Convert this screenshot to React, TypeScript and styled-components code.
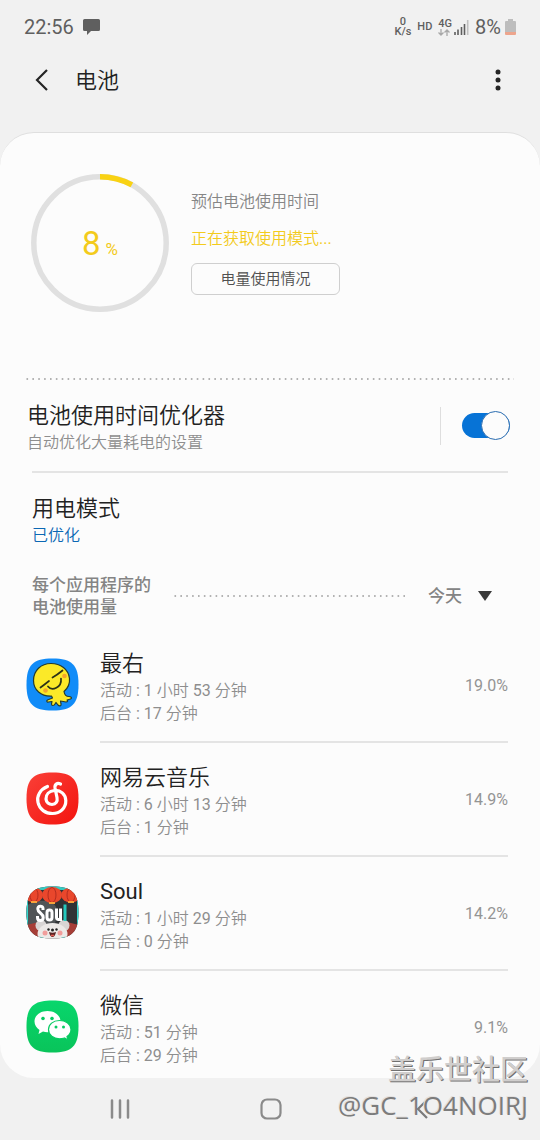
import React, { useState } from 'react';
import styled, { createGlobalStyle } from 'styled-components';

const lightFont = 'Roboto, "Noto Sans CJK SC DemiLight", "Noto Sans CJK SC", sans-serif';
const mediumFont = 'Roboto, "Noto Sans CJK SC", sans-serif';

const GlobalStyle = createGlobalStyle`
  *, *::before, *::after { box-sizing: border-box; }
  body {
    margin: 0;
    background: #f1f1f1;
    color: #222222;
    font-family: ${lightFont};
    font-size: 16px;
    font-weight: 400;
  }
  h1, h2, h3, p, ul { margin: 0; padding: 0; font-weight: inherit; }
  button, select { font-family: inherit; font-weight: inherit; }
`;

const Screen = styled.div`
  position: relative;
  display: flex;
  flex-direction: column;
  min-height: 100vh;
`;

const StatusBar = styled.div`
  display: flex;
  align-items: center;
  justify-content: space-between;
  height: 54px;
  padding: 0 24px;
  color: #5f5f5f;
`;

const StatusGroup = styled.div<{ $gap: number }>`
  display: flex;
  align-items: center;
  gap: ${(p) => p.$gap}px;
`;

const Clock = styled.span`
  font-size: 20px;
  line-height: 24px;
`;

const SmallStatus = styled.span`
  font-size: 11px;
  line-height: 10px;
  font-weight: 500;
  text-align: center;
  white-space: pre-line;
`;

const AppBar = styled.header`
  display: flex;
  align-items: center;
  height: 52px;
  margin-bottom: 26px;
  padding: 0 22px;
`;

const IconButton = styled.button`
  display: flex;
  align-items: center;
  justify-content: center;
  width: 40px;
  height: 40px;
  padding: 0;
  border: 0;
  background: none;
`;

const PageTitle = styled.h1`
  flex: 1;
  margin-left: 13px;
  padding-top: 2px;
  font-size: 22px;
  line-height: 32px;
`;

const Card = styled.main`
  border-top: 1px solid #dfdfdf;
  border-radius: 34px;
  background: #fcfcfc;
`;

const Summary = styled.section`
  display: flex;
  gap: 22px;
  padding: 41px 31px 66px;
`;

const Gauge = styled.div`
  display: grid;
  place-items: center;
  flex: none;
  width: 138px;
  height: 138px;
  > * { grid-area: 1 / 1; }
`;

const GaugeValue = styled.p`
  padding-top: 6px;
  color: #f3cb1c;
  font-size: 33px;
  line-height: 36px;
`;

const GaugeUnit = styled.span`
  margin-left: 5px;
  font-size: 17px;
`;

const SummaryText = styled.div`
  display: flex;
  flex-direction: column;
  align-items: flex-start;
  padding-top: 15px;
`;

const Caption = styled.p<{ $accent?: boolean }>`
  margin-bottom: 11px;
  color: ${(p) => (p.$accent ? '#f3cb1c' : '#868686')};
  font-size: 16px;
  line-height: 26px;
`;

const OutlineButton = styled.button`
  width: 149px;
  height: 32px;
  padding: 0;
  border: 1px solid #cfcfcf;
  border-radius: 6px;
  background: none;
  color: #505050;
  font-size: 15px;
  line-height: 24px;
`;

const Dots = styled.svg`
  display: block;
  flex: 1;
  min-width: 0;
  width: 100%;
  height: 2px;
`;

const DottedRule = styled.div`
  margin: 0 26px;
`;

const SettingRow = styled.label`
  display: flex;
  align-items: center;
  height: 91px;
  padding: 0 30px 0 27px;
`;

const SettingText = styled.span`
  display: flex;
  flex: 1;
  flex-direction: column;
  padding-top: 4px;
`;

const Title = styled.span`
  font-size: 22px;
  line-height: 30px;
`;

const Detail = styled.span<{ $blue?: boolean }>`
  color: ${(p) => (p.$blue ? '#0b68b4' : '#8e8e8e')};
  font-size: 16px;
  line-height: 23px;
`;

const Separator = styled.span`
  width: 1px;
  height: 38px;
  margin-right: 21px;
  background: #dedede;
`;

const Switch = styled.input`
  appearance: none;
  display: flex;
  align-items: center;
  justify-content: flex-end;
  width: 48px;
  height: 25px;
  margin: 0;
  border-radius: 13px;
  background: #0773d6;

  &::before {
    content: '';
    flex: none;
    width: 29px;
    height: 29px;
    border: 1px solid #2a6cb0;
    border-radius: 50%;
    background: #fcfcfc;
  }
  &:not(:checked) {
    justify-content: flex-start;
    background: #bbbbbb;
  }
`;

const Divider = styled.hr`
  height: 2px;
  margin: 0 32px;
  border: 0;
  background: #e4e4e4;
`;

const ModeRow = styled.section`
  display: flex;
  flex-direction: column;
  padding: 21px 32px 0;
`;

const UsageHeader = styled.div`
  display: flex;
  align-items: center;
  padding: 27px 32px 11px;
  color: #848484;
  font-family: ${mediumFont};
  font-weight: 500;
`;

const UsageTitle = styled.h2`
  width: 142px;
  font-size: 17px;
  line-height: 22px;
  white-space: pre-line;
`;

const Period = styled.label`
  display: flex;
  align-items: center;
  margin-left: 22px;
  padding-right: 16px;
`;

const PeriodSelect = styled.select`
  appearance: none;
  width: 50px;
  padding: 0;
  border: 0;
  background: none;
  color: #848484;
  font-size: 17px;
  line-height: 24px;
`;

const AppList = styled.ul`
  list-style: none;
`;

const AppRow = styled.li`
  display: flex;
  gap: 21px;
  height: 114px;
  padding: 0 32px 0 26px;
  &:last-child { height: 107px; }
`;

const AppIcon = styled.svg`
  flex: none;
  width: 53px;
  height: 53px;
  margin-top: 29px;
`;

const AppBody = styled.div`
  display: flex;
  flex: 1;
  align-items: center;
  justify-content: space-between;
  border-bottom: 2px solid #e4e4e4;
  ${AppRow}:last-child & { border-bottom-color: transparent; }
`;

const AppText = styled.div`
  display: flex;
  flex-direction: column;
  align-self: flex-start;
  padding-top: 20px;
`;

const Share = styled.span`
  align-self: flex-start;
  padding-top: 45px;
  color: #949494;
  font-size: 16px;
  line-height: 23px;
`;

const NavBar = styled.nav`
  display: grid;
  grid-template-columns: repeat(3, 1fr);
  place-items: center;
  flex: 1;
  min-height: 62px;
  padding: 0 43px 0 45px;
`;

const Watermark = styled.p`
  position: absolute;
  right: 12px;
  bottom: 17px;
  color: #7c7c7c;
  font-family: "Open Sans", "Noto Sans CJK SC", sans-serif;
  font-size: 26px;
  line-height: 36px;
  text-align: right;
  text-shadow: -1px -1px 0 #e4e1df;
  pointer-events: none;
`;

const WatermarkName = styled.span`
  display: block;
  color: #d0cecd;
  font-size: 28px;
  font-weight: 500;
  text-shadow: 1px 1px 0 #707070;
`;

const DottedLine = () => (
  <Dots aria-hidden="true">
    <line x1="0.5" y1="1" x2="100%" y2="1" stroke="#999" strokeWidth="1.6" strokeDasharray="1.6 4.27" />
  </Dots>
);

const squircle = 'M26.500 .5C46 .5 52.500 7 52.500 26.500S46 52.500 26.500 52.500 .5 46 .5 26.500 7 .5 26.500 .5Z';

const ZuiyouIcon = () => (
  <AppIcon viewBox="0 0 53 53" aria-hidden="true">
    <path d={squircle} fill="#118cf8" />
    <path
      d="M25 5.500C15 5.500 7.500 12.500 7.500 22.500C7.500 32 15 38.500 25.500 38L26.500 40L21.500 42C20 43 21 44.500 22.500 44L26 43.500L25.500 46C25.500 48 28 48 29 46L30 44.500L32 47C33.500 48.500 35.500 48 35 46L34.500 43L40 44C42 44 42 42.500 41 42L44.500 41C46.500 40 45 38.500 43 38.500C40 38.500 38.500 36.500 38 33.500C42 30 44 25.500 43.500 20.500C42.500 11 34.500 5.500 25 5.500Z"
      fill="#fbe928" stroke="#233b30" strokeWidth="1.200" strokeLinejoin="round"
    />
    <circle cx="38.500" cy="18" r="2.300" fill="#f4a52c" />
    <circle cx="19.500" cy="32.500" r="2.300" fill="#f4a52c" />
    <g fill="none" stroke="#2b3217" strokeWidth="1.700" strokeLinecap="round">
      <path d="M26.500 19.500Q31 17 36.500 12.500M14.500 29.500Q18 27 23 23M22 28.500C26 33.500 36 29.500 35 20.500" />
    </g>
  </AppIcon>
);

const NeteaseIcon = () => (
  <AppIcon viewBox="0 0 53 53" aria-hidden="true">
    <defs>
      <linearGradient id="netease" x1="0" y1="0" x2="1" y2="1">
        <stop offset="0" stopColor="#fa4038" />
        <stop offset="1" stopColor="#f3130e" />
      </linearGradient>
    </defs>
    <path d={squircle} fill="url(#netease)" />
    <path
      d="M21.500 14.500C14 17.500 10.500 24 12 30.500C13.500 37.500 19.500 41.500 26.500 41.500C34 41.500 40 36 39.800 28.500C39.500 22 34.500 18 28.500 18.500C23 19 19.800 22.500 20 27C20.300 30.500 23 32.500 26 32.500C30 32.300 31.800 29.500 31 25.500L29 16C28.500 12.500 31 10.500 34.500 12"
      fill="none" stroke="#fff" strokeWidth="3.200" strokeLinecap="round" strokeLinejoin="round"
    />
  </AppIcon>
);

const SoulIcon = () => (
  <AppIcon viewBox="0 0 53 53" aria-hidden="true">
    <defs>
      <clipPath id="soulShape"><path d={squircle} /></clipPath>
    </defs>
    <g clipPath="url(#soulShape)">
      <rect width="53" height="53" fill="#303335" />
      <path d="M0 20Q12 12 24 16T28 40H0Z" fill="#505456" />
      <rect width="53" height="4" fill="#35c9c0" />
      <path d="M0 8V53H2V8M51 8V53H53V8" fill="#35d8ce" />
      <g fill="#e9472c">
        <ellipse cx="8" cy="9" rx="9" ry="7.500" />
        <ellipse cx="26" cy="9" rx="10" ry="8" />
        <ellipse cx="45" cy="9" rx="10" ry="7.500" />
      </g>
      <g fill="none" stroke="#b32d20" strokeWidth="1">
        <ellipse cx="26" cy="9" rx="4" ry="7.500" />
        <ellipse cx="8" cy="9" rx="4" ry="7" />
        <ellipse cx="45" cy="9" rx="4" ry="7" />
      </g>
      <path d="M5 16H11M23 17H29M42 16H48" stroke="#f8a23a" strokeWidth="2" />
      <path d="M0 53V39L13 36L18 53M53 53V39L41 36L36 53" fill="#a63e37" />
      <circle cx="15" cy="39.500" r="5.500" fill="#d8d5d4" />
      <circle cx="38" cy="39.500" r="5.500" fill="#d8d5d4" />
      <ellipse cx="26.500" cy="48" rx="15" ry="11" fill="#ece9e7" />
      <path d="M10 53Q12 49 18 52M43 53Q41 49 35 52" fill="#2fd0c6" />
      <circle cx="19" cy="47" r="2.500" fill="#f19d9b" />
      <circle cx="34" cy="47" r="2.500" fill="#f19d9b" />
      <circle cx="22.500" cy="43.500" r="1.200" fill="#222" />
      <circle cx="30.500" cy="43.500" r="1.200" fill="#222" />
      <circle cx="26.500" cy="44" r="1.500" fill="#222" />
      <path d="M23 46Q26.500 47.500 30 46Q29 51 26.500 51Q24 51 23 46Z" fill="#5b2323" />
      <path d="M25 49.500H28" stroke="#e75b52" strokeWidth="1.500" />
    </g>
    <g fill="none" stroke="#fff" strokeWidth="3">
      <path d="M17 24V22.500C17 19.500 11.800 19.500 11.800 23C11.800 27 17.200 27 17.200 31.500C17.200 35.500 11.500 35.500 11.500 31.500V30" />
      <rect x="21" y="24" width="5" height="10" rx="2.500" />
      <path d="M30.500 22.500V31.500C30.500 34.500 34.500 34 34.500 31.500V22.500V35" />
    </g>
    <path d="M39 18.500V35" stroke="#24c9bd" strokeWidth="3" />
  </AppIcon>
);

const WechatIcon = () => (
  <AppIcon viewBox="0 0 53 53" aria-hidden="true">
    <defs>
      <linearGradient id="wechat" x1="0" y1="0" x2="0" y2="1">
        <stop offset="0" stopColor="#08d66c" />
        <stop offset="1" stopColor="#09c45a" />
      </linearGradient>
    </defs>
    <path d={squircle} fill="url(#wechat)" />
    <path d="M21.500 11C14 11 8.500 15.500 8.500 21.500C8.500 25 10.500 28 13.500 30L12.500 34L17 31.500Q20 32.500 23.500 32C32 31.500 34.500 26 34.500 21.500C34.500 15.500 29 11 21.500 11Z" fill="#fff" />
    <path d="M33.500 20.500C27 20.500 22.500 24.500 22.500 29.500C22.500 35 27.500 38.800 33.500 38.800Q36 38.800 38.500 38L42 40L41 36.500C43.500 34.800 45 32.500 45 29.500C45 24.500 40 20.500 33.500 20.500Z" fill="#fff" stroke="#08cb62" strokeWidth="1.200" />
    <g fill="#08cb62">
      <circle cx="17" cy="18.500" r="1.800" />
      <circle cx="26" cy="18.500" r="1.800" />
      <circle cx="30" cy="27" r="1.500" />
      <circle cx="37.500" cy="27" r="1.500" />
    </g>
  </AppIcon>
);

const apps = [
  { name: '最右', active: '1 小时 53 分钟', background: '17 分钟', share: '19.0%', Icon: ZuiyouIcon },
  { name: '网易云音乐', active: '6 小时 13 分钟', background: '1 分钟', share: '14.9%', Icon: NeteaseIcon },
  { name: 'Soul', active: '1 小时 29 分钟', background: '0 分钟', share: '14.2%', Icon: SoulIcon },
  { name: '微信', active: '51 分钟', background: '29 分钟', share: '9.1%', Icon: WechatIcon },
];

export default function App() {
  const [optimizer, setOptimizer] = useState(true);

  return (
    <Screen>
      <GlobalStyle />
      <StatusBar>
        <StatusGroup $gap={9}>
          <Clock>22:56</Clock>
          <svg width="18" height="17" viewBox="0 0 18 17" aria-hidden="true">
            <path d="M1.500 0H15.500Q17 0 17 1.500V10.500Q17 12 15.500 12H8L4 16V12H1.500Q0 12 0 10.500V1.500Q0 0 1.500 0Z" fill="#5f5f5f" />
          </svg>
        </StatusGroup>
        <StatusGroup $gap={6}>
          <SmallStatus>{'0\nK/s'}</SmallStatus>
          <SmallStatus>HD</SmallStatus>
          <StatusGroup $gap={2}>
            <div>
              <SmallStatus as="div">4G</SmallStatus>
              <svg width="12" height="7" viewBox="0 0 12 7" fill="none" stroke="#a8a8a8" strokeWidth="1.300" display="block" aria-hidden="true">
                <path d="M3 0V6M.5 3.500L3 6L5.500 3.500M9 7V1M6.500 3.500L9 1L11.500 3.500" />
              </svg>
            </div>
            <svg width="15" height="15" viewBox="0 0 15 15" aria-hidden="true">
              <path d="M1 12V15M4 9.500V15M7.500 7V15M10.500 4V15" stroke="#5f5f5f" strokeWidth="1.600" />
              <path d="M13.700 0V15" stroke="#c0c0c0" strokeWidth="1.600" />
            </svg>
          </StatusGroup>
          <StatusGroup $gap={4}>
            <Clock>8%</Clock>
            <svg width="11" height="17" viewBox="0 0 11 17" aria-hidden="true">
              <path d="M3 0H8V2H10Q11 2 11 3V13H0V3Q0 2 1 2H3Z" fill="#bdbdbd" />
              <path d="M0 13H11V15Q11 16 10 16H1Q0 16 0 15Z" fill="#eda58d" />
            </svg>
          </StatusGroup>
        </StatusGroup>
      </StatusBar>

      <AppBar>
        <IconButton aria-label="返回">
          <svg width="14" height="22" viewBox="0 0 14 22" fill="none" stroke="#252525" strokeWidth="2.200" aria-hidden="true">
            <path d="M12 1L2 11L12 21" />
          </svg>
        </IconButton>
        <PageTitle>电池</PageTitle>
        <IconButton aria-label="更多选项">
          <svg width="6" height="22" viewBox="0 0 6 22" fill="#252525" aria-hidden="true">
            <circle cx="3" cy="3" r="2.500" />
            <circle cx="3" cy="11" r="2.500" />
            <circle cx="3" cy="19" r="2.500" />
          </svg>
        </IconButton>
      </AppBar>

      <Card>
        <Summary>
          <Gauge>
            <svg width="138" height="138" viewBox="0 0 138 138" fill="none" strokeWidth="5.500" aria-hidden="true">
              <circle cx="69" cy="69" r="66.200" stroke="#e0e0e0" />
              <circle cx="69" cy="69" r="66.200" stroke="#f9d213" pathLength="100" strokeDasharray="8 92" transform="rotate(-90 69 69)" />
            </svg>
            <GaugeValue>8<GaugeUnit>%</GaugeUnit></GaugeValue>
          </Gauge>
          <SummaryText>
            <Caption>预估电池使用时间</Caption>
            <Caption $accent>正在获取使用模式...</Caption>
            <OutlineButton>电量使用情况</OutlineButton>
          </SummaryText>
        </Summary>

        <DottedRule><DottedLine /></DottedRule>

        <SettingRow>
          <SettingText>
            <Title>电池使用时间优化器</Title>
            <Detail>自动优化大量耗电的设置</Detail>
          </SettingText>
          <Separator />
          <Switch type="checkbox" role="switch" checked={optimizer} onChange={(e) => setOptimizer(e.target.checked)} />
        </SettingRow>
        <Divider />

        <ModeRow>
          <Title>用电模式</Title>
          <Detail $blue>已优化</Detail>
        </ModeRow>

        <UsageHeader>
          <UsageTitle>{'每个应用程序的\n电池使用量'}</UsageTitle>
          <DottedLine />
          <Period>
            <PeriodSelect aria-label="时间段" defaultValue="today">
              <option value="today">今天</option>
            </PeriodSelect>
            <svg width="14" height="10" viewBox="0 0 14 10" aria-hidden="true">
              <path d="M0 0H14L7 10Z" fill="#3a3a3a" />
            </svg>
          </Period>
        </UsageHeader>

        <AppList>
          {apps.map(({ name, active, background, share, Icon }) => (
            <AppRow key={name}>
              <Icon />
              <AppBody>
                <AppText>
                  <Title as="h3">{name}</Title>
                  <Detail>活动 : {active}</Detail>
                  <Detail>后台 : {background}</Detail>
                </AppText>
                <Share>{share}</Share>
              </AppBody>
            </AppRow>
          ))}
        </AppList>
      </Card>

      <NavBar>
        <IconButton aria-label="最近">
          <svg width="20" height="20" viewBox="0 0 20 20" stroke="#8a8a8a" strokeWidth="2.500" strokeLinecap="round" aria-hidden="true">
            <path d="M2 1.500V18.500M10 1.500V18.500M18 1.500V18.500" />
          </svg>
        </IconButton>
        <IconButton aria-label="主屏幕">
          <svg width="22" height="22" viewBox="0 0 22 22" fill="none" stroke="#8a8a8a" strokeWidth="2.200" aria-hidden="true">
            <rect x="1.500" y="1.500" width="19" height="19" rx="5.500" />
          </svg>
        </IconButton>
        <IconButton aria-label="后退">
          <svg width="12" height="20" viewBox="0 0 12 20" fill="none" stroke="#7a7a7a" strokeWidth="2.200" aria-hidden="true">
            <path d="M11 1L2 10L11 19" />
          </svg>
        </IconButton>
      </NavBar>

      <Watermark>
        <WatermarkName>盖乐世社区</WatermarkName>
        @GC_1O4NOIRJ
      </Watermark>
    </Screen>
  );
}
